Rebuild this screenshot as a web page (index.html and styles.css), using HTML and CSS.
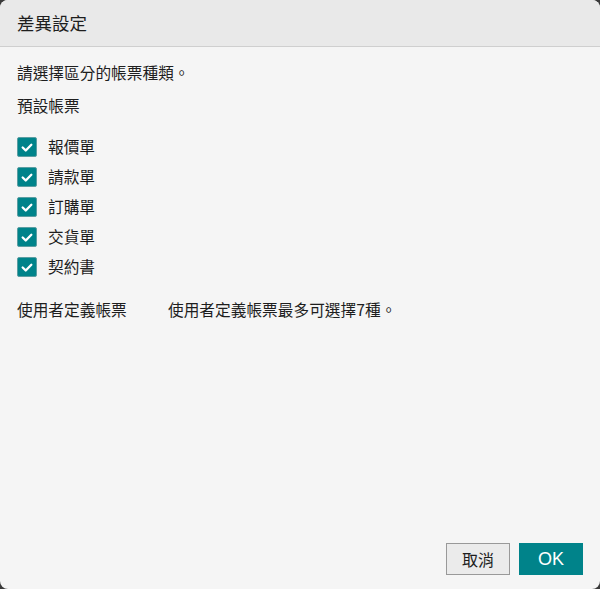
FILE: index.html
```html
<!DOCTYPE html>
<html>
<head>
<meta charset="utf-8">
<link rel="stylesheet" href="styles.css">
</head>
<body>
<div class="dialog">
  <div class="header">差異設定</div>
  <div class="content">
    <p class="intro">請選擇區分的帳票種類。</p>
    <p class="section">預設帳票</p>
    <ul class="checks">
      <li><span class="box"><svg viewBox="0 0 20 20" width="20" height="20"><path d="M5.2 10 L8.6 13.3 L14.8 7" fill="none" stroke="#fff" stroke-width="2.6" stroke-linecap="round" stroke-linejoin="round"/></svg></span>報價單</li>
      <li><span class="box"><svg viewBox="0 0 20 20" width="20" height="20"><path d="M5.2 10 L8.6 13.3 L14.8 7" fill="none" stroke="#fff" stroke-width="2.6" stroke-linecap="round" stroke-linejoin="round"/></svg></span>請款單</li>
      <li><span class="box"><svg viewBox="0 0 20 20" width="20" height="20"><path d="M5.2 10 L8.6 13.3 L14.8 7" fill="none" stroke="#fff" stroke-width="2.6" stroke-linecap="round" stroke-linejoin="round"/></svg></span>訂購單</li>
      <li><span class="box"><svg viewBox="0 0 20 20" width="20" height="20"><path d="M5.2 10 L8.6 13.3 L14.8 7" fill="none" stroke="#fff" stroke-width="2.6" stroke-linecap="round" stroke-linejoin="round"/></svg></span>交貨單</li>
      <li><span class="box"><svg viewBox="0 0 20 20" width="20" height="20"><path d="M5.2 10 L8.6 13.3 L14.8 7" fill="none" stroke="#fff" stroke-width="2.6" stroke-linecap="round" stroke-linejoin="round"/></svg></span>契約書</li>
    </ul>
    <div class="custom">
      <span class="custom-label">使用者定義帳票</span>
      <span class="custom-note">使用者定義帳票最多可選擇7種。</span>
    </div>
  </div>
  <div class="footer">
    <button class="btn cancel">取消</button>
    <button class="btn ok">OK</button>
  </div>
</div>
</body>
</html>
```
FILE: styles.css
```css
html, body {
  margin: 0;
  padding: 0;
  height: 100%;
  background: #3a3a3a;
}
body {
  font-family: "Noto Sans CJK TC", "Noto Sans", sans-serif;
  color: #1e1e1e;
}
.dialog {
  box-sizing: border-box;
  width: 600px;
  height: 589px;
  background: #f5f5f5;
  border-radius: 8px;
  overflow: hidden;
  display: flex;
  flex-direction: column;
}
.header {
  box-sizing: border-box;
  height: 47px;
  background: #e9e9e9;
  border-bottom: 1px solid #cfcfcf;
  padding: 0 17px;
  font-size: 17.5px;
  line-height: 46px;
}
.content {
  flex: 1;
  padding: 15px 17px 0;
  font-size: 15.7px;
}
.intro {
  margin: 0;
  line-height: 22px;
}
.section {
  margin: 11px 0 0;
  line-height: 22px;
}
.checks {
  list-style: none;
  margin: 15px 0 0;
  padding: 0;
}
.checks li {
  display: flex;
  align-items: center;
  height: 30px;
  line-height: 20px;
}
.box {
  box-sizing: border-box;
  width: 20px;
  height: 20px;
  background: #00838a;
  border: 1px solid #5b9ea2;
  border-radius: 2px;
  margin-right: 11px;
  display: flex;
  align-items: center;
  justify-content: center;
}
.box svg {
  display: block;
  width: 19px;
  height: 19px;
}
.custom {
  display: flex;
  margin-top: 17px;
  line-height: 22px;
}
.custom-label {
  width: 151px;
}
.footer {
  display: flex;
  justify-content: flex-end;
  gap: 9px;
  padding: 0 17px 14px;
}
.btn {
  box-sizing: border-box;
  width: 64px;
  height: 32px;
  font-family: "Noto Sans CJK TC", "Noto Sans", sans-serif;
  font-size: 16px;
  padding: 0;
  cursor: pointer;
}
.cancel {
  background: #ebebeb;
  border: 1px solid #999;
  color: #1e1e1e;
}
.ok {
  background: #00838a;
  border: none;
  color: #fff;
  font-family: "Liberation Sans", Arial, sans-serif;
  font-size: 18px;
}
```
